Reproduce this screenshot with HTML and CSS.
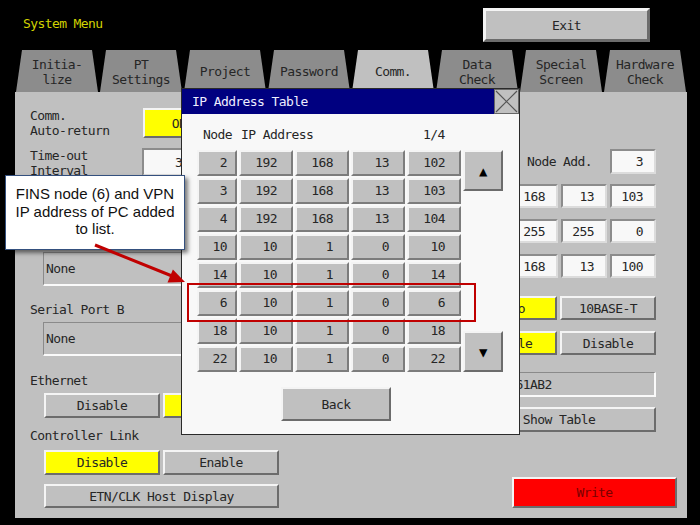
FILE: index.html
```html
<!DOCTYPE html>
<html lang="en">
<head>
    <meta charset="UTF-8">
    <title>System Menu - Comm.</title>
    <link rel="stylesheet" href="styles.css">
</head>
<body>
<div class="screen">

    <!-- Top bar -->
    <div class="topbar">
        <span class="title">System Menu</span>
        <div class="btn exit">Exit</div>
    </div>

    <!-- Tabs -->
    <div class="tabs">
        <div class="tab">Initia-<br>lize</div>
        <div class="tab">PT<br>Settings</div>
        <div class="tab">Project</div>
        <div class="tab">Password</div>
        <div class="tab active">Comm.</div>
        <div class="tab">Data<br>Check</div>
        <div class="tab">Special<br>Screen</div>
        <div class="tab">Hardware<br>Check</div>
    </div>

    <!-- Comm. settings panel -->
    <div class="panel">
        <div class="left">
            <div class="opt">
                <div class="opt-label">Comm.<br>Auto-return</div>
                <div class="btn yellow opt-val">ON</div>
            </div>
            <div class="opt timeout">
                <div class="opt-label">Time-out<br>Interval</div>
                <div class="field opt-val">3</div>
            </div>
            <div class="inset port port-a">None</div>
            <div class="lbl port-b">Serial Port B</div>
            <div class="inset port">None</div>
            <div class="lbl eth">Ethernet</div>
            <div class="pair">
                <div class="btn">Disable</div>
                <div class="btn yellow">Enable</div>
            </div>
            <div class="lbl clk">Controller Link</div>
            <div class="pair">
                <div class="btn yellow">Disable</div>
                <div class="btn">Enable</div>
            </div>
            <div class="btn host">ETN/CLK Host Display</div>
        </div>

        <div class="right">
            <div class="rrow node">
                <span class="node-lbl">Node Add.</span>
                <div class="field num">3</div>
            </div>
            <div class="rrow ip">
                <div class="quad">
                    <div class="field num">192</div>
                    <div class="field num">168</div>
                    <div class="field num">13</div>
                    <div class="field num">103</div>
                </div>
            </div>
            <div class="rrow ip">
                <div class="quad">
                    <div class="field num">255</div>
                    <div class="field num">255</div>
                    <div class="field num">255</div>
                    <div class="field num">0</div>
                </div>
            </div>
            <div class="rrow ip">
                <div class="quad">
                    <div class="field num">192</div>
                    <div class="field num">168</div>
                    <div class="field num">13</div>
                    <div class="field num">100</div>
                </div>
            </div>
            <div class="rrow opts speed">
                <div class="duo">
                    <div class="btn yellow">Auto</div>
                    <div class="btn">10BASE-T</div>
                </div>
            </div>
            <div class="rrow opts">
                <div class="duo">
                    <div class="btn yellow">Enable</div>
                    <div class="btn">Disable</div>
                </div>
            </div>
            <div class="rrow mac">
                <div class="inset mac-box">00000A061AB2</div>
            </div>
            <div class="rrow table-row">
                <div class="btn show">Show Table</div>
            </div>
            <div class="btn red write">Write</div>
        </div>
    </div>

    <!-- IP Address Table dialog -->
    <div class="dialog">
        <div class="dlg-title">
            <span>IP Address Table</span>
            <div class="dlg-close">
                <svg width="23" height="23" viewBox="0 0 23 23">
                    <path d="M1 1 L22 22 M22 1 L1 22" stroke="#555" stroke-width="1.2" fill="none"/>
                </svg>
            </div>
        </div>
        <div class="dlg-body">
            <div class="dlg-head">
                <span class="h-node">Node</span>
                <span class="h-ip">IP Address</span>
                <span>1/4</span>
            </div>
            <div class="dlg-list">
                <div class="ip-grid">
                    <div class="cell n">2</div><div class="cell">192</div><div class="cell">168</div><div class="cell">13</div><div class="cell">102</div>
                    <div class="cell n">3</div><div class="cell">192</div><div class="cell">168</div><div class="cell">13</div><div class="cell">103</div>
                    <div class="cell n">4</div><div class="cell">192</div><div class="cell">168</div><div class="cell">13</div><div class="cell">104</div>
                    <div class="cell n">10</div><div class="cell">10</div><div class="cell">1</div><div class="cell">0</div><div class="cell">10</div>
                    <div class="cell n">14</div><div class="cell">10</div><div class="cell">1</div><div class="cell">0</div><div class="cell">14</div>
                    <div class="cell n">6</div><div class="cell">10</div><div class="cell">1</div><div class="cell">0</div><div class="cell">6</div>
                    <div class="cell n">18</div><div class="cell">10</div><div class="cell">1</div><div class="cell">0</div><div class="cell">18</div>
                    <div class="cell n">22</div><div class="cell">10</div><div class="cell">1</div><div class="cell">0</div><div class="cell">22</div>
                </div>
                <div class="scroll">
                    <div class="btn arrow">&#9650;</div>
                    <div class="btn arrow">&#9660;</div>
                </div>
            </div>
            <div class="btn back">Back</div>
        </div>
    </div>

    <!-- Annotation -->
    <div class="highlight"></div>
    <div class="callout">FINS node (6) and VPN IP address of PC added to list.</div>
    <svg class="pointer" width="100" height="50" viewBox="0 0 100 50">
        <line x1="5" y1="7" x2="82" y2="38" stroke="#c00000" stroke-width="3"/>
        <polygon points="95,44 77.5,44.4 82.9,31.4" fill="#c00000"/>
    </svg>
</div>
</body>
</html>
```

FILE: styles.css
```css
body {
    margin: 0;
    background: #000;
    font-family: "DejaVu Sans Mono", "Liberation Mono", monospace;
    font-size: 13px;
    letter-spacing: -0.6px;
    color: #262626;
}
.screen {
    position: relative;
    width: 700px;
    height: 525px;
    padding: 0 13px 0 15px;
    box-sizing: border-box;
    overflow: hidden;
}

/* top bar */
.topbar {
    display: flex;
    justify-content: space-between;
    height: 50px;
}
.title {
    color: #d2d200;
    padding-left: 8px;
    line-height: 48px;
}
.btn {
    background: #c0c0c0;
    border: 2px solid;
    border-color: #f4f4f4 #6c6c6c #6c6c6c #f4f4f4;
    box-sizing: border-box;
    display: flex;
    align-items: center;
    justify-content: center;
}
.btn.yellow {
    background: #ffff00;
}
.btn.red {
    background: #ff0000;
    color: #7a0000;
}
.exit {
    width: 167px;
    height: 34px;
    margin: 8px 37px 0 0;
    border-width: 3px;
}

/* tabs */
.tabs {
    display: flex;
    height: 42px;
}
.tab {
    width: 84px;
    background: #8c8c8c;
    clip-path: polygon(7px 0, 77px 0, 83px 100%, 1px 100%);
    display: flex;
    align-items: center;
    justify-content: center;
    text-align: center;
    line-height: 15px;
    padding-top: 1px;
    box-sizing: border-box;
}
.tab.active {
    background: #c0c0c0;
}

/* panel */
.panel {
    display: flex;
    height: 426px;
    background: #c0c0c0;
    padding: 16px 31px 0 15px;
    box-sizing: border-box;
}
.left {
    width: 250px;
    display: flex;
    flex-direction: column;
}
.opt {
    display: flex;
    height: 30px;
}
.opt-label {
    width: 113px;
    line-height: 15px;
}
.opt-val {
    width: 72px;
}
.opt.timeout {
    margin-top: 10px;
    height: 28px;
}
.opt.timeout .opt-label {
    width: 112px;
}
.opt.timeout .opt-val {
    width: 73px;
}
.field {
    background: #f8f8f8;
    border: 2px solid;
    border-color: #8c8c8c #dcdcdc #dcdcdc #8c8c8c;
    box-sizing: border-box;
    display: flex;
    align-items: center;
    justify-content: center;
}
.field.num {
    justify-content: flex-end;
    padding-right: 11px;
}
.inset {
    background: #c0c0c0;
    border: 1px solid;
    border-color: #8a8a8a #fafafa #fafafa #8a8a8a;
    border-width: 1px 2px 2px 1px;
    box-sizing: border-box;
    display: flex;
    align-items: center;
    padding-left: 2px;
}
.lbl {
    line-height: 16px;
}
.port {
    margin: 4px 0 0 13px;
    width: 235px;
    height: 34px;
}
.port.port-a {
    margin-top: 76px;
}
.port-b {
    margin-top: 16px;
}
.eth {
    margin-top: 17px;
}
.pair {
    display: flex;
    gap: 3px;
    margin: 4px 0 0 14px;
    height: 25px;
}
.pair .btn {
    width: 116px;
}
.clk {
    margin-top: 10px;
}
.clk + .pair {
    margin-top: 6px;
}
.host {
    margin: 9px 0 0 14px;
    width: 235px;
    height: 24px;
}

.right {
    flex: 1;
    margin-left: 20px;
    display: flex;
    flex-direction: column;
}
.rrow {
    display: flex;
    justify-content: flex-end;
    align-items: center;
}
.rrow.node {
    margin-top: 41px;
    height: 25px;
}
.node-lbl {
    margin-right: 18px;
}
.node .field {
    width: 46px;
    height: 25px;
}
.rrow.ip {
    margin-top: 11px;
    height: 24px;
}
.node + .ip {
    margin-top: 10px;
}
.quad {
    display: flex;
    gap: 3px;
    height: 100%;
}
.quad .field {
    width: 46px;
}
.rrow.opts {
    margin-top: 11px;
    height: 24px;
}
.rrow.speed {
    margin-top: 18px;
}
.duo {
    display: flex;
    gap: 3px;
    height: 100%;
}
.duo .btn:first-child {
    width: 93px;
}
.duo .btn:last-child {
    width: 96px;
}
.rrow.mac {
    margin-top: 17px;
    height: 25px;
}
.mac-box {
    width: 200px;
    height: 100%;
    padding-left: 8px;
}
.rrow.table-row {
    margin-top: 10px;
    height: 25px;
}
.show {
    width: 194px;
    height: 100%;
}
.write {
    align-self: flex-end;
    margin: 45px -21px 0 0;
    width: 165px;
    height: 31px;
}

/* dialog */
.dialog {
    position: absolute;
    left: 181px;
    top: 88px;
    width: 339px;
    height: 347px;
    background: #f8f8f8;
    border: 1px solid #2a2a2a;
    box-sizing: border-box;
}
.dlg-title {
    display: flex;
    justify-content: space-between;
    height: 25px;
    background: #000080;
    color: #eef;
}
.dlg-title span {
    padding-left: 10px;
    line-height: 25px;
}
.dlg-close {
    width: 25px;
    height: 25px;
    background: #c0c0c0;
    border: 1px solid #666;
    box-sizing: border-box;
}
.dlg-close svg {
    display: block;
}
.dlg-body {
    padding: 14px 0 0 15px;
}
.dlg-head {
    display: flex;
    line-height: 14px;
    padding-left: 6px;
}
.h-node {
    width: 38px;
}
.h-ip {
    width: 182px;
}
.dlg-list {
    display: flex;
    gap: 2px;
    margin-top: 8px;
}
.ip-grid {
    display: grid;
    grid-template-columns: 40px repeat(4, 54px);
    grid-auto-rows: 26px;
    gap: 2px;
}
.cell {
    background: #c0c0c0;
    border: 2px solid;
    border-color: #f4f4f4 #7c7c7c #7c7c7c #f4f4f4;
    box-sizing: border-box;
    text-align: right;
    padding-right: 14px;
    line-height: 22px;
}
.cell.n {
    padding-right: 8px;
}
.scroll {
    display: flex;
    flex-direction: column;
    justify-content: space-between;
}
.arrow {
    width: 40px;
    height: 41px;
    font-size: 14px;
    color: #000;
}
.back {
    margin: 15px 0 0 84px;
    width: 110px;
    height: 34px;
}

/* annotation */
.highlight {
    position: absolute;
    left: 187px;
    top: 283px;
    width: 289px;
    height: 39px;
    border: 2px solid #c00000;
    box-sizing: border-box;
}
.callout {
    position: absolute;
    left: 5px;
    top: 175px;
    width: 180px;
    height: 75px;
    box-sizing: border-box;
    padding: 9px 4px 0;
    background: #fff;
    border: 1px solid #34507e;
    box-shadow: 3px 3px 4px rgba(0, 0, 0, 0.5);
    font-family: "Liberation Sans", Arial, sans-serif;
    font-size: 15px;
    letter-spacing: 0;
    line-height: 17.5px;
    text-align: center;
    color: #111;
}
.pointer {
    position: absolute;
    left: 90px;
    top: 238px;
}
```
